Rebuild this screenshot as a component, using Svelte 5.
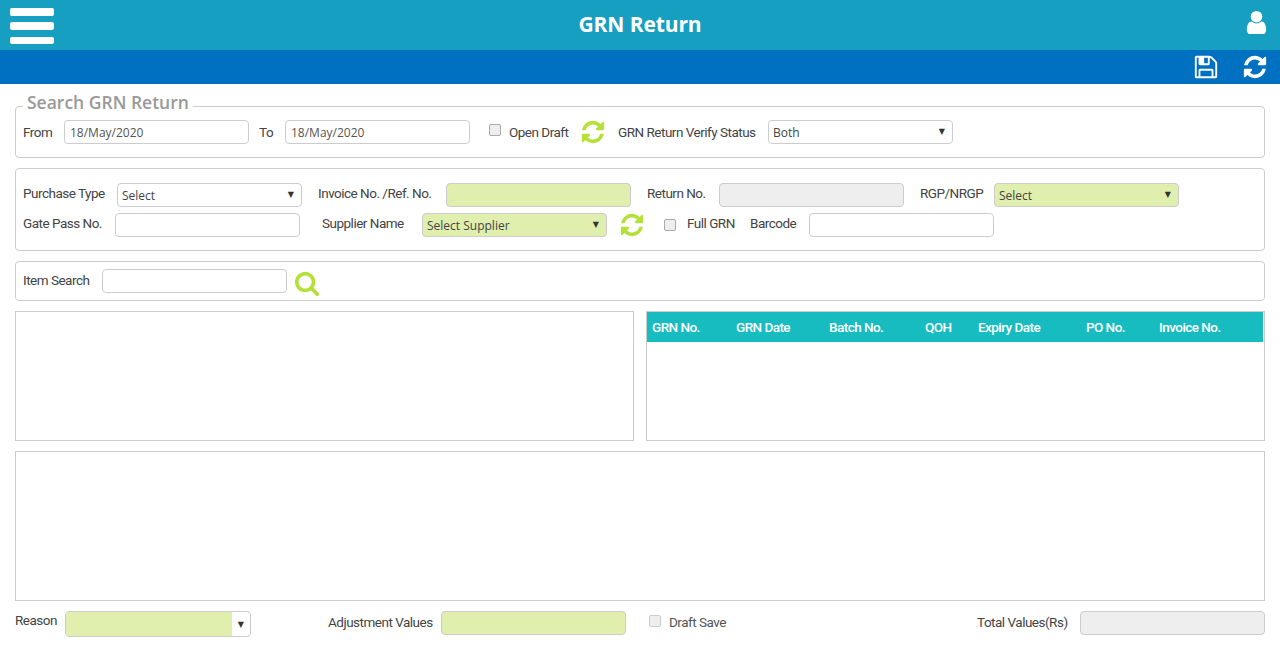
<script lang="ts">
  const refresh = 'M1639 1056q0 5-1 7-64 268-268 434.5t-478 166.5q-146 0-282.5-55t-243.5-157l-129 129q-19 19-45 19t-45-19-19-45v-448q0-26 19-45t45-19h448q26 0 45 19t19 45-19 45l-137 137q71 66 161 102t187 36q134 0 250-65t186-179q11-17 53-117 8-23 30-23h192q13 0 22.5 9.5t9.5 22.5zm25-800v448q0 26-19 45t-45 19h-448q-26 0-45-19t-19-45 19-45l138-138q-148-137-349-137-134 0-250 65t-186 179q-11 17-53 117-8 23-30 23h-199q-13 0-22.5-9.5t-9.5-22.5v-7q65-268 270-434.5t480-166.5q146 0 284 55.5t245 156.5l130-129q19-19 45-19t45 19 19 45z';
  const user = 'M1536 1399q0 109-62.5 187t-150.5 78h-854q-88 0-150.5-78t-62.5-187q0-85 8.5-160.5t31.5-152 58.5-131 94-89 134.5-34.5q131 128 313 128t313-128q76 0 134.5 34.5t94 89 58.5 131 31.5 152 8.5 160.5zm-256-887q0 159-112.5 271.5t-271.5 112.5-271.5-112.5-112.5-271.5 112.5-271.5 271.5-112.5 271.5 112.5 112.5 271.5z';
  const save = 'M512 1536h768v-384h-768v384zm896 0h128v-896q0-14-10-38.5t-20-34.5l-281-281q-10-10-34-20t-39-10v416q0 40-28 68t-68 28h-576q-40 0-68-28t-28-68v-416h-128v1280h128v-416q0-40 28-68t68-28h832q40 0 68 28t28 68v416zm-384-928v-320q0-13-9.5-22.5t-22.5-9.5h-192q-13 0-22.5 9.5t-9.5 22.5v320q0 13 9.5 22.5t22.5 9.5h192q13 0 22.5-9.5t9.5-22.5zm640 32v928q0 40-28 68t-68 28h-1344q-40 0-68-28t-28-68v-1344q0-40 28-68t68-28h928q40 0 88 20t76 48l280 280q28 28 48 76t20 88z';
  const search = 'M1216 832q0-185-131.5-316.5t-316.5-131.5-316.5 131.5-131.5 316.5 131.5 316.5 316.5 131.5 316.5-131.5 131.5-316.5zm512 832q0 52-38 90t-90 38q-54 0-90-38l-343-342q-179 124-399 124-143 0-273.5-55.5t-225-150-150-225-55.5-273.5 55.5-273.5 150-225 225-150 273.5-55.5 273.5 55.5 225 150 150 225 55.5 273.5q0 220-124 399l343 343q37 37 37 90z';

  const columns = ['GRN No.', 'GRN Date', 'Batch No.', 'QOH', 'Expiry Date', 'PO No.', 'Invoice No.'];
</script>

{#snippet icon(d: string, cls: string)}
  <svg class={cls} viewBox="0 0 1792 1792" aria-hidden="true"><path {d} /></svg>
{/snippet}

{#snippet select(text: string, cls: string)}
  <div class="select {cls}">
    <span>{text}</span>
    <i class="caret">▼</i>
  </div>
{/snippet}

<header class="topbar">
  <button class="menu" aria-label="Menu"><span></span><span></span><span></span></button>
  <h1>GRN Return</h1>
  {@render icon(user, 'user-icon')}
</header>

<div class="toolbar">
  {@render icon(save, 'tool-icon')}
  {@render icon(refresh, 'tool-icon')}
</div>

<main>
  <fieldset class="panel search-panel">
    <legend>Search GRN Return</legend>
    <div class="row">
      <label class="l-from" for="from">From</label>
      <input id="from" class="field" value="18/May/2020" />
      <label class="l-to" for="to">To</label>
      <input id="to" class="field" value="18/May/2020" />
      <input class="check c-draft" type="checkbox" />
      <span class="l-draft">Open Draft</span>
      {@render icon(refresh, 'green-icon g-draft')}
      <span class="l-verify">GRN Return Verify Status</span>
      {@render select('Both', '')}
    </div>
  </fieldset>

  <section class="panel filter-panel">
    <div class="row">
      <span class="l-purchase up">Purchase Type</span>
      {@render select('Select', '')}
      <span class="l-invoice up">Invoice No. /Ref. No.</span>
      <input class="field green" />
      <span class="l-return up">Return No.</span>
      <input class="field grey" disabled />
      <span class="l-rgp up">RGP/NRGP</span>
      {@render select('Select', 'green')}
    </div>
    <div class="row">
      <span class="l-gate up">Gate Pass No.</span>
      <input class="field" />
      <span class="l-supplier up">Supplier Name</span>
      {@render select('Select Supplier', 'green')}
      {@render icon(refresh, 'green-icon g-supplier')}
      <input class="check c-full" type="checkbox" />
      <span class="l-full up">Full GRN</span>
      <span class="l-barcode up">Barcode</span>
      <input class="field" />
    </div>
  </section>

  <section class="panel item-panel">
    <div class="row">
      <span class="l-item">Item Search</span>
      <input class="field" />
      {@render icon(search, 'green-icon g-search')}
    </div>
  </section>

  <div class="split">
    <div class="box"></div>
    <div class="box">
      <table>
        <thead>
          <tr>
            {#each columns as col}<th>{col}</th>{/each}
          </tr>
        </thead>
      </table>
    </div>
  </div>

  <div class="box wide"></div>

  <footer class="row">
    <span class="l-reason">Reason</span>
    <div class="select reason">
      <span class="reason-fill"></span>
      <i class="caret">▼</i>
    </div>
    <span class="l-adjust">Adjustment Values</span>
    <input class="field green" />
    <input class="check c-save" type="checkbox" disabled />
    <span class="l-save">Draft Save</span>
    <span class="l-total">Total Values(Rs)</span>
    <input class="field grey" disabled />
  </footer>
</main>

<style>
  :global(body) {
    background: #fff;
    font-family: Roboto, "Liberation Sans", sans-serif;
    font-size: 13.5px;
    letter-spacing: -0.5px;
    color: #444;
  }

  .topbar {
    height: 50px;
    background: #179fc1;
    display: flex;
    align-items: center;
    justify-content: space-between;
    position: relative;
    padding: 0 10px 0 10px;
    box-sizing: border-box;
  }

  h1 {
    position: absolute;
    left: 0;
    right: 0;
    top: 8px;
    margin: 0;
    text-align: center;
    font: 700 21px/32px "Open Sans", sans-serif;
    letter-spacing: -0.1px;
    color: #fff;
  }

  .menu {
    width: 44px;
    height: 36px;
    margin-top: 2px;
    padding: 0;
    border: 0;
    background: none;
    display: flex;
    flex-direction: column;
    justify-content: space-between;
  }

  .menu span {
    display: block;
    height: 7.5px;
    border-radius: 2px;
    background: #fff;
  }

  .user-icon {
    width: 27px;
    height: 27px;
    fill: #fff;
    margin-bottom: 6px;
  }

  .toolbar {
    height: 34px;
    background: #0070c0;
    display: flex;
    justify-content: flex-end;
    align-items: center;
    gap: 23px;
    padding-right: 12px;
    box-sizing: border-box;
  }

  .tool-icon {
    width: 26px;
    height: 26px;
    fill: #fff;
  }

  main {
    padding: 10px 15px 0;
    display: flex;
    flex-direction: column;
    gap: 10px;
  }

  .panel {
    border: 1px solid #ccc;
    border-radius: 4px;
    box-sizing: border-box;
    padding: 0 7px;
    margin: 0;
    min-width: 0;
  }

  .search-panel {
    height: 64px;
  }

  legend {
    font: 600 17.5px/24px "Open Sans", sans-serif;
    letter-spacing: 0;
    color: #999;
    padding: 0 4px;
    margin-left: 0;
    position: relative;
    top: -4px;
  }

  .search-panel .row {
    margin-top: 2px;
  }

  .filter-panel {
    height: 83px;
    padding-top: 14px;
    display: flex;
    flex-direction: column;
    gap: 6px;
  }

  .item-panel {
    height: 40px;
    padding-top: 7px;
  }

  .row {
    display: flex;
    align-items: center;
    height: 24px;
    white-space: nowrap;
  }

  .row > span {
    flex: none;
  }

  .up {
    margin-bottom: 4px;
  }

  .field {
    width: 185px;
    height: 24px;
    box-sizing: border-box;
    flex: none;
    border: 1px solid #ccc;
    border-radius: 4px;
    background: #fff;
    padding: 0 5px;
    font: 12px "Open Sans", sans-serif;
    letter-spacing: 0;
    color: #555;
    outline: none;
  }

  .green {
    background: #e0eeae;
  }

  .grey {
    background: #eee;
  }

  .select {
    width: 185px;
    height: 24px;
    box-sizing: border-box;
    flex: none;
    display: flex;
    align-items: center;
    justify-content: space-between;
    border: 1px solid #ccc;
    border-radius: 4px;
    padding: 1px 7px 0 4px;
    font: 12px "Open Sans", sans-serif;
    letter-spacing: 0;
    color: #444;
    background-color: #fff;
  }

  .select.green {
    background: #e0eeae;
  }

  .caret {
    font: normal 8px "DejaVu Sans", sans-serif;
    color: #333;
    margin-top: -3px;
  }

  .check {
    width: 12px;
    height: 12px;
    margin: 0;
    flex: none;
    appearance: none;
    box-sizing: border-box;
    border: 1px solid #aaa;
    border-radius: 2px;
    background: #eee;
  }

  .check:disabled {
    border-color: #ccc;
  }

  .green-icon {
    width: 26px;
    height: 26px;
    fill: #b5e03a;
    flex: none;
  }

  .l-from { width: 41px; }
  .l-to { margin-left: 10px; width: 26px; }
  .c-draft { margin: -4px 0 0 19px; }
  .row > .l-draft { margin: 0 0 0 8px; width: 59px; }
  .g-draft { margin-left: 12px; }
  .row > .l-verify { margin-left: 12px; width: 150px; }

  .row > .l-purchase { width: 94px; }
  .row > .l-invoice { margin-left: 16px; width: 128px; }
  .row > .l-return { margin-left: 16px; width: 72px; }
  .row > .l-rgp { margin-left: 16px; width: 74px; }

  .row > .l-gate { width: 92px; }
  .row > .l-supplier { margin-left: 22px; width: 100px; }
  .g-supplier { margin-left: 12px; }
  .c-full { margin: -1px 0 0 19px; }
  .row > .l-full { margin-left: 11px; width: 47px; }
  .row > .l-barcode { margin-left: 16px; width: 59px; }

  .row > .l-item { width: 79px; margin-bottom: 2px; }
  .g-search { margin-left: 7px; margin-top: 4px; }

  .split {
    display: grid;
    grid-template-columns: 619px 619px;
    justify-content: space-between;
    height: 130px;
  }

  .box {
    border: 1px solid #ccc;
    box-sizing: border-box;
    padding-right: 1px;
  }

  .wide {
    height: 150px;
  }

  table {
    width: 616px;
    border-collapse: collapse;
    table-layout: fixed;
  }

  th {
    height: 30px;
    padding: 0 0 0 5px;
    background: #17bcc1;
    color: #fff;
    font-weight: 500;
    letter-spacing: -0.55px;
    text-align: left;
  }

  th:nth-child(1) { width: 79px; }
  th:nth-child(2) { width: 88px; }
  th:nth-child(3) { width: 91px; }
  th:nth-child(4) { width: 48px; }
  th:nth-child(5) { width: 103px; }
  th:nth-child(6) { width: 68px; }

  footer.row {
    height: 26px;
    align-items: flex-start;
  }

  footer > span {
    line-height: 22px;
  }

  .row > .l-reason {
    width: 50px;
    line-height: 18px;
  }

  .reason {
    width: 186px;
    height: 26px;
    padding: 0 6px 0 0;
    overflow: hidden;
  }

  .reason-fill {
    width: 166px;
    height: 100%;
    background: #e0eeae;
  }

  .reason .caret {
    margin-top: 1px;
  }

  .row > .l-adjust { margin-left: 77px; width: 113px; }
  .c-save { margin: 4px 0 0 23px; }
  .row > .l-save { margin-left: 8px; width: 308px; color: #555; }
  .row > .l-total { width: 103px; }
</style>
